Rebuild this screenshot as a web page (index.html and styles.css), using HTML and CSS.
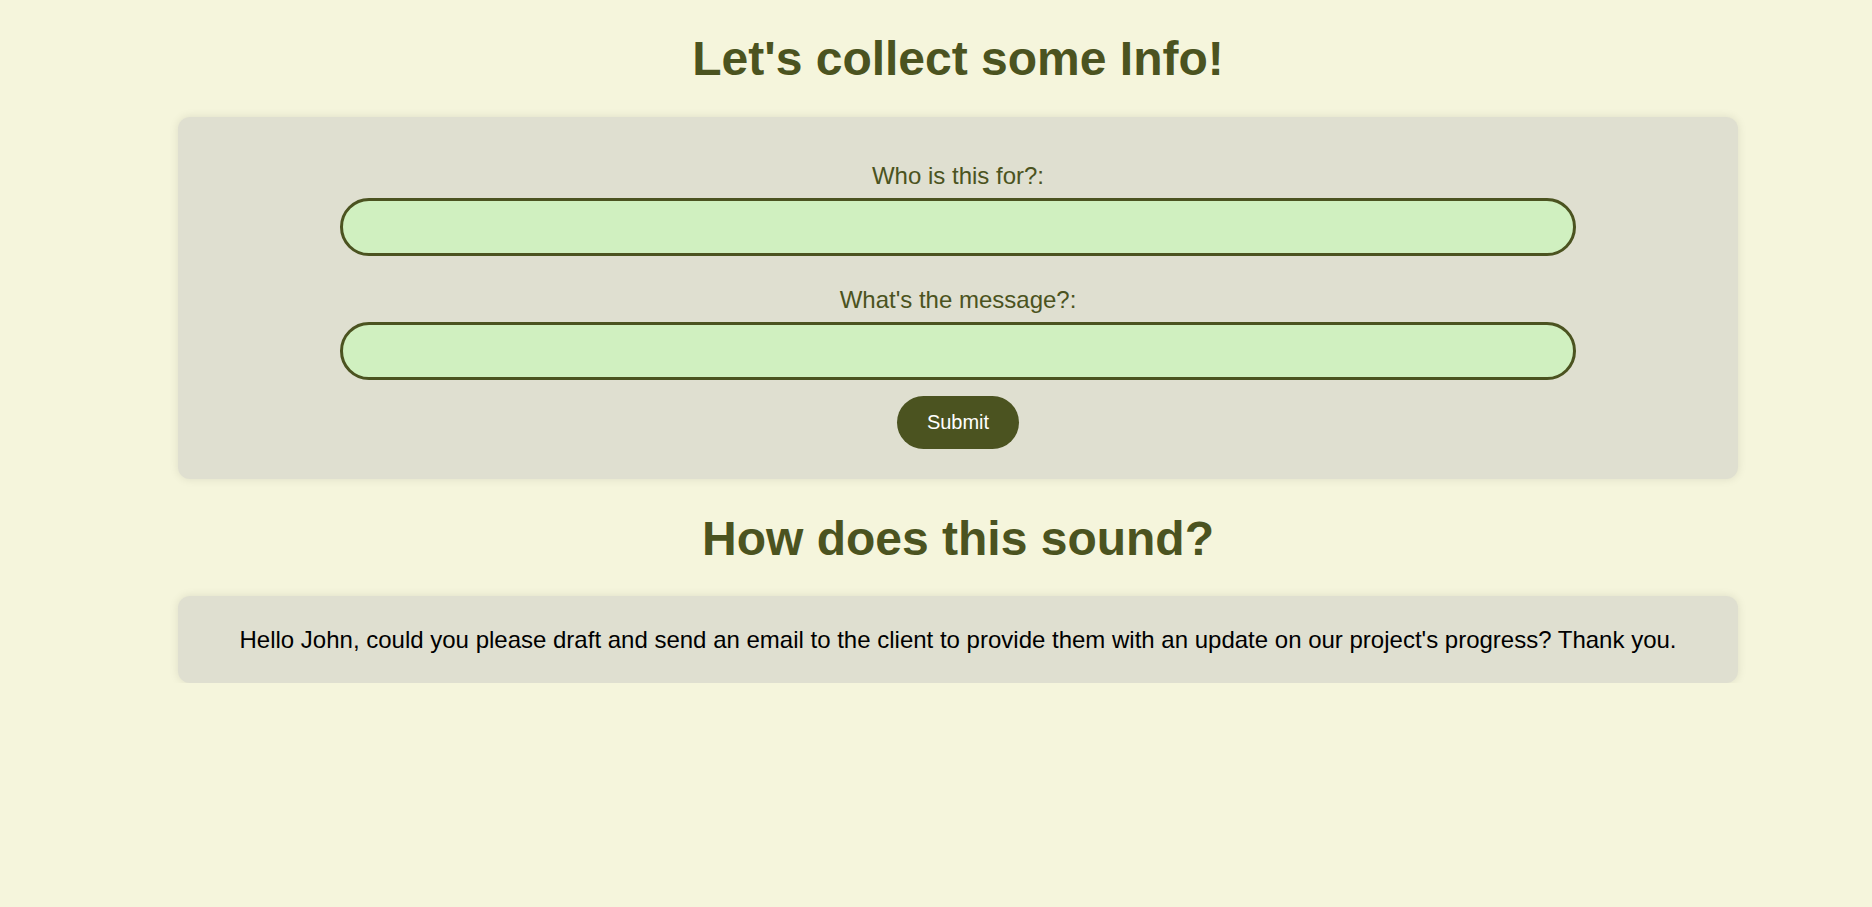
FILE: index.html
```html
<!DOCTYPE html>
<html lang="en">
<head>
<meta charset="utf-8">
<title>Let's collect some Info!</title>
<link rel="stylesheet" href="styles.css">
</head>
<body>
<main class="page">
  <h1 class="title">Let's collect some Info!</h1>
  <section class="card form-card">
    <form class="form">
      <label class="label" for="who">Who is this for?:</label>
      <input class="field" id="who" type="text">
      <label class="label label-second" for="msg">What's the message?:</label>
      <input class="field" id="msg" type="text">
      <button class="submit" type="button">Submit</button>
    </form>
  </section>
  <h1 class="title title-second">How does this sound?</h1>
  <section class="card result-card">
    <p class="result">Hello John, could you please draft and send an email to the client to provide them with an update on our project's progress? Thank you.</p>
  </section>
</main>
</body>
</html>
```

FILE: styles.css
```css
html, body {
  margin: 0;
  padding: 0;
}

body {
  background: #f5f5dc;
  font-family: "Liberation Sans", Arial, sans-serif;
  color: #4b5320;
}

.page {
  padding-left: 44px;
  display: flex;
  flex-direction: column;
  align-items: center;
}

.title {
  margin: 31px 0 31px;
  font-size: 48px;
  font-weight: bold;
  line-height: 55px;
  color: #4b5320;
  text-align: center;
}

.title-second {
  margin: 32px 0 30px;
}

.card {
  box-sizing: border-box;
  width: 1560px;
  background: #dfdfd0;
  border-radius: 12px;
  box-shadow: 0 0 10px rgba(0, 0, 0, 0.1);
}

.form-card {
  padding: 45px 20px 30px;
}

.form {
  display: flex;
  flex-direction: column;
  align-items: center;
}

.label {
  display: block;
  font-size: 24px;
  line-height: 28px;
  color: #4b5320;
  margin-bottom: 8px;
}

.label-second {
  margin-top: 30px;
}

.field {
  box-sizing: border-box;
  width: 1236px;
  height: 58px;
  margin: 0;
  padding: 10px 24px;
  background: #d0f0c0;
  border: 3px solid #4b5320;
  border-radius: 30px;
  font-family: inherit;
  font-size: 20px;
  outline: none;
}

.submit {
  margin-top: 16px;
  box-sizing: border-box;
  height: 53px;
  padding: 0 30px;
  background: #4b5320;
  color: #ffffff;
  border: none;
  border-radius: 27px;
  font-family: "Liberation Sans", Arial, sans-serif;
  font-size: 20px;
}

.result-card {
  padding: 30px 20px 29px;
}

.result {
  margin: 0;
  font-size: 24px;
  line-height: 28px;
  color: #000000;
  text-align: center;
}
```
